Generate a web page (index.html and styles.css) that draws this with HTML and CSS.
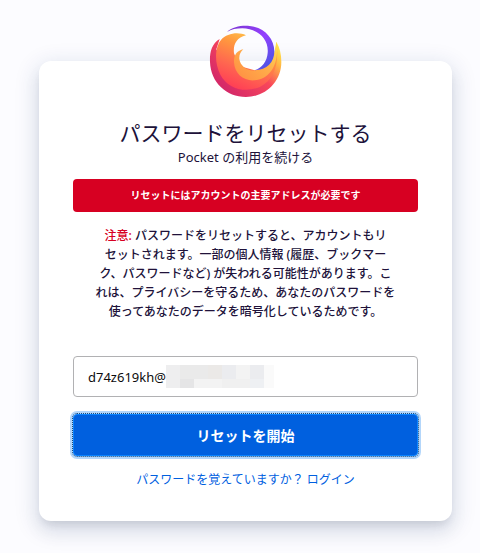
FILE: index.html
```html
<!DOCTYPE html>
<html lang="ja">
<head>
<meta charset="utf-8">
<meta name="viewport" content="width=device-width, initial-scale=1">
<title>パスワードをリセットする</title>
<link rel="stylesheet" href="styles.css">
</head>
<body>
<div class="page">
  <svg class="logo" viewBox="27 27 219 219" role="img" aria-label="Firefox">
    <defs>
      <linearGradient id="purple" x1="0" y1="0" x2="1" y2="1">
        <stop offset="0" stop-color="#7b35d0"/><stop offset=".5" stop-color="#9440ff"/><stop offset="1" stop-color="#3b58dd"/>
      </linearGradient>
      <linearGradient id="outer" x1=".95" y1=".1" x2=".15" y2=".75">
        <stop offset="0" stop-color="#ffe94a"/><stop offset=".2" stop-color="#ffb746"/><stop offset=".5" stop-color="#f9475a"/><stop offset="1" stop-color="#d62a68"/>
      </linearGradient>
      <linearGradient id="body" x1=".7" y1="0" x2=".25" y2="1">
        <stop offset="0" stop-color="#ffca4c"/><stop offset=".3" stop-color="#ff963f"/><stop offset=".65" stop-color="#ff6550"/><stop offset="1" stop-color="#ff3956"/>
      </linearGradient>
      <linearGradient id="inner" x1="1" y1="0" x2=".1" y2=".9">
        <stop offset="0" stop-color="#ffe355"/><stop offset=".5" stop-color="#ffae4a"/><stop offset="1" stop-color="#ff9244"/>
      </linearGradient>
    </defs>
    <path fill="url(#outer)" d="M59 69C34 84 29 110 30 138C32 199 79 243 138 243C197 243 244 197 244 138C244 114 239 94 229 77L220 130L165 180L75 150L49 100Z"/>
    <path fill="url(#body)" d="M138 58C116 47 81 51 63 72C44 94 43 142 61 176C84 220 137 232 181 212C221 193 239 145 229 77C230 123 207 161 164 163L118 150L102 112C99 87 109 65 138 58Z"/>
    <path fill="url(#inner)" d="M130 100C112 104 101 116 102 139C104 174 130 195 163 193C211 190 239 143 229 77C226 124 205 159 165 163C139 165 121 149 118 129C117 116 122 108 130 100Z"/>
    <path fill="url(#purple)" d="M81 48C99 32 123 28 149 30C191 33 223 66 223 106C223 139 201 162 164 163C186 155 201 137 203 111C207 66 170 38 127 37C109 37 94 40 81 48Z"/>
  </svg>
  <main class="card">
    <h1 class="title">パスワードをリセットする</h1>
    <p class="subtitle">Pocket の利用を続ける</p>
    <p class="error" role="alert">リセットにはアカウントの主要アドレスが必要です</p>
    <p class="notice"><span class="notice-label">注意:</span> パスワードをリセットすると、アカウントもリセットされます。一部の個人情報 (履歴、ブックマーク、パスワードなど) が失われる可能性があります。これは、プライバシーを守るため、あなたのパスワードを使ってあなたのデータを暗号化しているためです。</p>
    <form class="form">
      <div class="field">
        <input class="email" type="text" value="d74z619kh@" aria-label="メールアドレス">
        <svg class="mask" viewBox="0 0 108 23" aria-hidden="true" shape-rendering="crispEdges">
          <path fill="#eeeeef" d="M0 0h14v14H0zM0 14h14v9H0z"/>
          <path fill="#eaeaea" d="M14 0h28v14H14z"/>
          <path fill="#ebe9e7" d="M42 0h14v14H42z"/>
          <path fill="#ebecef" d="M56 0h14v14H56zM84 0h14v14H84z"/>
          <path fill="#f3f3f3" d="M70 0h14v14H70zM28 14h28v9H28z"/>
          <path fill="#e5e5e6" d="M14 14h14v9H14z"/>
          <path fill="#f0f0f0" d="M56 14h28v9H56z"/>
          <path fill="#eef0f3" d="M84 14h14v9H84z"/>
          <path fill="#fafafa" d="M98 0h10v23H98z"/>
        </svg>
      </div>
      <button class="submit" type="button">リセットを開始</button>
    </form>
    <p class="login"><a href="#">パスワードを覚えていますか？ ログイン</a></p>
  </main>
</div>
</body>
</html>
```
FILE: styles.css
```css
* {
  box-sizing: border-box;
}

body {
  margin: 0;
  background: #fcfcff;
  color: #20123a;
  font-family: "Noto Sans", "Noto Sans CJK JP", sans-serif;
  font-size: 12px;
  line-height: 19px;
}

.page {
  display: flex;
  flex-direction: column;
  align-items: center;
  padding: 25px 28px 32px 39px;
}

.logo {
  position: relative;
  z-index: 1;
  width: 73px;
  height: 73px;
  margin-bottom: -37px;
}

.card {
  width: 100%;
  max-width: 480px;
  padding: 58px 34px 32px;
  border-radius: 12px;
  background: #fff;
  box-shadow:
    0 12px 18px 2px rgba(34, 0, 51, 0.04),
    0 6px 22px 4px rgba(7, 48, 114, 0.12),
    0 6px 10px -4px rgba(14, 13, 26, 0.12);
  text-align: center;
}

.title {
  margin: 0;
  font-size: 21px;
  font-weight: 400;
  line-height: 28px;
}

.subtitle {
  margin: 0 0 12px;
  font-size: 13px;
  line-height: 20px;
}

.error {
  margin: 0 0 14px;
  padding: 7px;
  border-radius: 4px;
  background: #d70022;
  color: #fff;
  font-size: 10px;
  font-weight: 700;
}

.notice {
  margin: 0 0 35px;
  padding: 0 21px;
  font-weight: 500;
  line-break: strict;
}

.notice-label {
  color: #d70022;
}

.field {
  position: relative;
  margin-bottom: 17px;
}

.email {
  display: block;
  width: 100%;
  height: 41px;
  padding: 0 14px;
  border: 1px solid #b1b1b3;
  border-radius: 4px;
  background: #fff;
  color: #0c0c0d;
  font: inherit;
  font-size: 13px;
}

.mask {
  position: absolute;
  top: 9px;
  left: 93px;
  width: 108px;
  height: 23px;
}

.submit {
  display: block;
  width: 100%;
  height: 42px;
  padding: 0;
  border: 1px solid #0a84ff;
  border-radius: 4px;
  outline: 1px dotted #174b80;
  background: #0060df;
  box-shadow: 0 0 0 3px #b3d6fa;
  color: #fff;
  font: inherit;
  font-size: 14px;
  font-weight: 700;
}

.login {
  margin: 14px 0 0;
}

.login a {
  color: #0060df;
  text-decoration: none;
}
```
